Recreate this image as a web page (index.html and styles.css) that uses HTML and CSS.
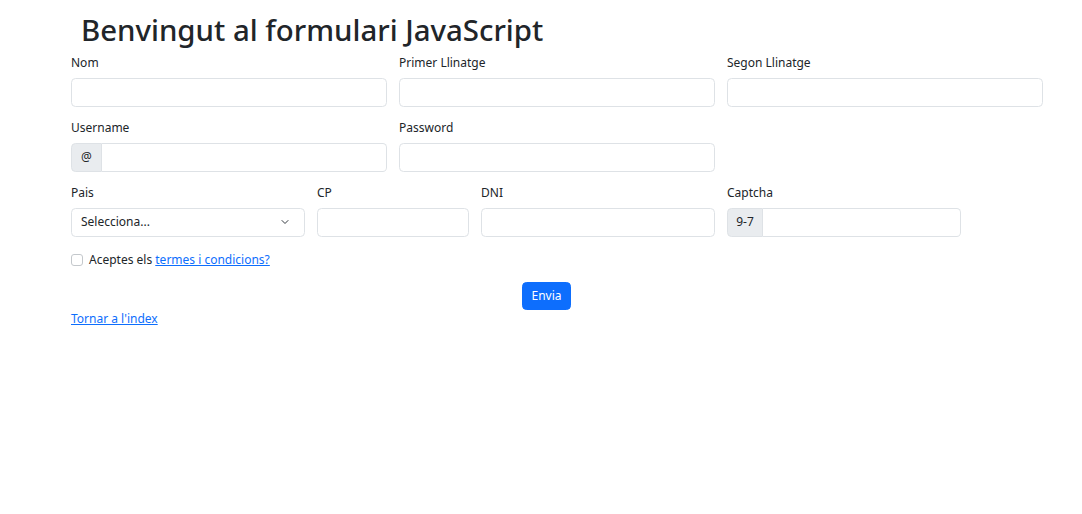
FILE: index.html
```html
<!DOCTYPE html>
<html lang="ca">
<head>
<meta charset="utf-8">
<title>Formulari</title>
<link rel="stylesheet" href="styles.css">
</head>
<body>
<main class="container">
  <h1 class="title">Benvingut al formulari JavaScript</h1>
  <form class="form-grid">
    <div class="field span-4">
      <label class="label" for="nom">Nom</label>
      <input class="control" id="nom" type="text">
    </div>
    <div class="field span-4">
      <label class="label" for="ll1">Primer Llinatge</label>
      <input class="control" id="ll1" type="text">
    </div>
    <div class="field span-4">
      <label class="label" for="ll2">Segon Llinatge</label>
      <input class="control" id="ll2" type="text">
    </div>

    <div class="field span-4">
      <label class="label" for="user">Username</label>
      <div class="input-group">
        <span class="addon addon-at">@</span>
        <input class="control grouped" id="user" type="text">
      </div>
    </div>
    <div class="field span-4">
      <label class="label" for="pwd">Password</label>
      <input class="control" id="pwd" type="password">
    </div>
    <div class="span-4"></div>

    <div class="field span-3">
      <label class="label" for="pais">Pais</label>
      <div class="select">
        <span class="select-text">Selecciona...</span>
        <svg class="chevron" width="10" height="8" viewBox="0 0 16 16"><path fill="none" stroke="#343a40" stroke-linecap="round" stroke-linejoin="round" stroke-width="2" d="m2 5 6 6 6-6"/></svg>
      </div>
    </div>
    <div class="field span-2">
      <label class="label" for="cp">CP</label>
      <input class="control" id="cp" type="text">
    </div>
    <div class="field span-3">
      <label class="label" for="dni">DNI</label>
      <input class="control" id="dni" type="text">
    </div>
    <div class="field span-3">
      <label class="label" for="cap">Captcha</label>
      <div class="input-group">
        <span class="addon addon-cap">9-7</span>
        <input class="control grouped" id="cap" type="text">
      </div>
    </div>

    <div class="check span-12">
      <span class="checkbox"></span>
      <span>Aceptes els <a href="#" class="link">termes i condicions?</a></span>
    </div>

    <div class="actions span-12">
      <button type="button" class="btn">Envia</button>
    </div>
  </form>
  <a href="#" class="link back">Tornar a l'index</a>
</main>
</body>
</html>
```

FILE: styles.css
```css
* { box-sizing: border-box; }
html, body { margin: 0; padding: 0; }
body {
  font-family: "Noto Sans", "Open Sans", sans-serif;
  font-size: 12px;
  line-height: 1.5;
  color: #212529;
  background: #fff;
}
.container {
  width: 972px;
  margin: 0 auto 0 71px;
  padding-top: 12px;
}
.title {
  margin: 0 0 6px 10px;
  font-size: 29.4px;
  font-weight: 500;
  line-height: 36px;
}
.form-grid {
  display: grid;
  grid-template-columns: repeat(12, 70px);
  column-gap: 12px;
  row-gap: 12.5px;
}
.span-2 { grid-column: span 2; }
.span-3 { grid-column: span 3; }
.span-4 { grid-column: span 4; }
.span-12 { grid-column: span 12; }
.field { display: flex; flex-direction: column; }
.label { display: block; margin-bottom: 6px; line-height: 18px; }
.control {
  display: block;
  width: 100%;
  height: 28.5px;
  padding: 4px 9px;
  font: inherit;
  color: #212529;
  background: #fff;
  border: 1px solid #dee2e6;
  border-radius: 4.5px;
  outline: none;
}
.input-group { display: flex; height: 28.5px; }
.addon {
  display: flex;
  align-items: center;
  justify-content: center;
  background: #e9ecef;
  border: 1px solid #dee2e6;
  border-radius: 4.5px 0 0 4.5px;
  color: #212529;
}
.addon-at { width: 31px; }
.addon-cap { width: 36px; }
.control.grouped { flex: 1; border-left: none; border-radius: 0 4.5px 4.5px 0; }
.select {
  display: flex;
  align-items: center;
  justify-content: space-between;
  height: 28.5px;
  padding: 0 14px 0 9px;
  border: 1px solid #dee2e6;
  border-radius: 4.5px;
}
.chevron { display: block; }
.check {
  display: flex;
  align-items: center;
  gap: 6px;
  margin-top: 2px;
  line-height: 18px;
}
.checkbox {
  width: 12px;
  height: 12px;
  border: 1px solid #c4c8cc;
  border-radius: 3px;
  background: #fff;
}
.link { color: #0d6efd; text-decoration: underline; }
.actions {
  display: flex;
  justify-content: center;
  padding-right: 21px;
  margin-top: 0;
}
.btn {
  height: 28.5px;
  padding: 0 8px;
  font: inherit;
  color: #fff;
  background: #0d6efd;
  border: 1px solid #0d6efd;
  border-radius: 4.5px;
}
.back { display: inline-block; margin-top: 0; line-height: 18px; }
```
